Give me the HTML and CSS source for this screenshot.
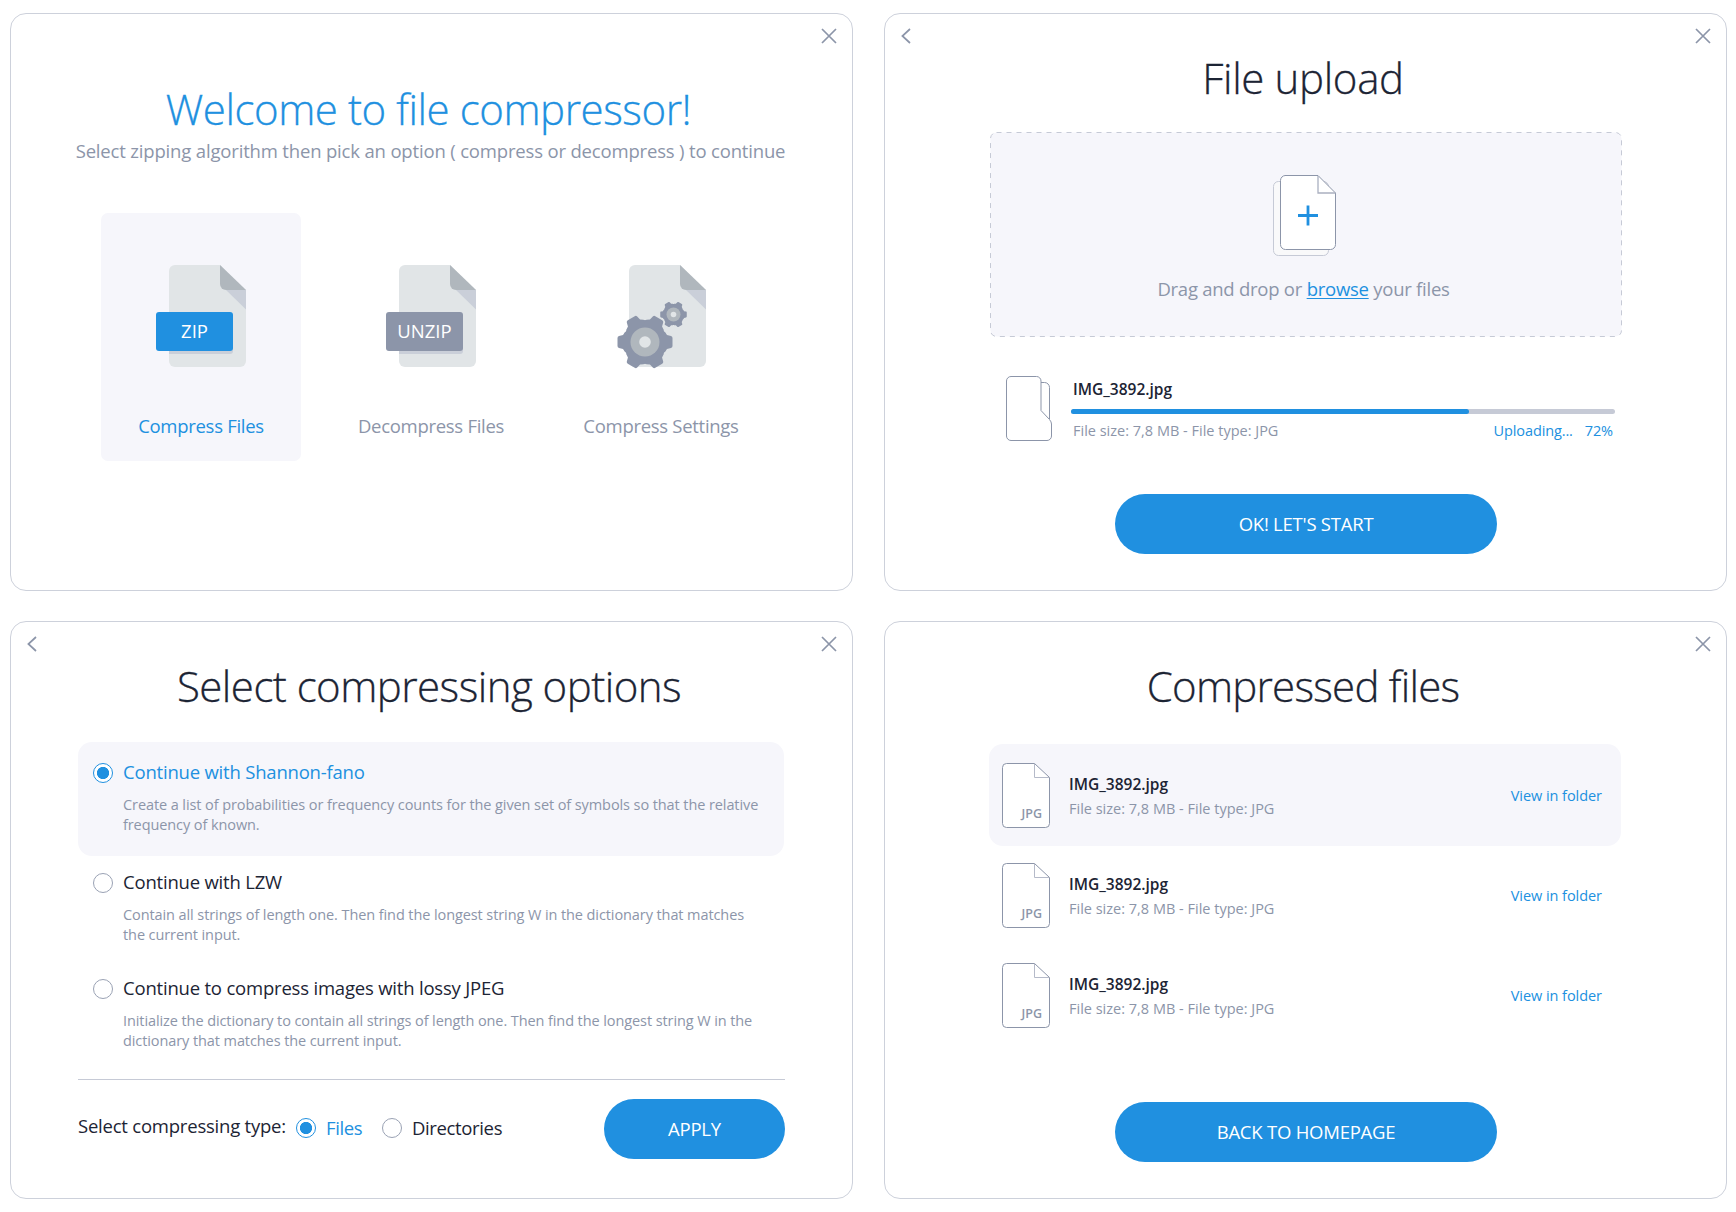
FILE: index.html
```html
<!DOCTYPE html>
<html lang="en">
<head>
<meta charset="utf-8">
<title>File compressor</title>
<link rel="stylesheet" href="styles.css">
</head>
<body>
<svg class="sprite" aria-hidden="true">
  <symbol id="close" viewBox="0 0 16 16"><path d="M1 1l14 14M15 1L1 15" fill="none" stroke="currentColor" stroke-width="1.7"/></symbol>
  <symbol id="back" viewBox="0 0 10 16"><path d="M9 1L1.4 8L9 15" fill="none" stroke="currentColor" stroke-width="1.7"/></symbol>
  <symbol id="sheet" viewBox="0 0 77 102">
    <path d="M6 0H51L77 25V96a6 6 0 0 1-6 6H6a6 6 0 0 1-6-6V6a6 6 0 0 1 6-6z" fill="#e1e5e7"/>
    <path d="M57 25H77V44.500z" fill="#cacfd9"/>
    <path d="M51 0L77 25H57a6 6 0 0 1-6-6z" fill="#b0b7bd"/>
  </symbol>
  <symbol id="gear" viewBox="-28 -28 56 56">
    <g fill="#8c95a9">
      <circle r="22"/>
      <g id="teeth">
        <path id="tooth" d="M-10-20L-7-22L-6-26Q-5.500-27.500-4-27.500H4Q5.500-27.500 6-26L7-22L10-20V0H-10z" transform="rotate(90)"/>
        <use href="#tooth" transform="rotate(60)"/><use href="#tooth" transform="rotate(120)"/>
        <use href="#tooth" transform="rotate(180)"/><use href="#tooth" transform="rotate(240)"/>
        <use href="#tooth" transform="rotate(300)"/>
      </g>
    </g>
    <circle r="14.500" fill="#b0b7bd"/><circle r="5.800" fill="#e1e5e7"/>
  </symbol>
  <symbol id="jpg" viewBox="0 0 50 66">
    <path d="M5.500 1.500H33.500L48.500 15.500V61.500a4 4 0 0 1-4 4H5.500a4 4 0 0 1-4-4V5.500a4 4 0 0 1 4-4z" fill="#fff" stroke="#8c95a9"/>
    <path d="M33.500 2V15.500H48" fill="none" stroke="#b5bac9"/>
  </symbol>
</svg>

<main class="board">
  <section class="panel">
    <header class="bar"><svg class="ico-close"><use href="#close"/></svg></header>
    <h1 class="title title-welcome">Welcome to file compressor!</h1>
    <p class="subtitle">Select zipping algorithm then pick an option ( compress or decompress ) to continue</p>
    <div class="modes">
      <div class="mode active">
        <div class="art"><svg class="sheet"><use href="#sheet"/></svg><i class="shade"></i><span class="tag">ZIP</span></div>
        <span class="mode-name">Compress Files</span>
      </div>
      <div class="mode">
        <div class="art"><svg class="sheet"><use href="#sheet"/></svg><i class="shade"></i><span class="tag">UNZIP</span></div>
        <span class="mode-name">Decompress Files</span>
      </div>
      <div class="mode">
        <div class="art"><svg class="sheet"><use href="#sheet"/></svg><svg class="gear-big"><use href="#gear"/></svg><svg class="gear-small"><use href="#gear"/></svg></div>
        <span class="mode-name">Compress Settings</span>
      </div>
    </div>
  </section>

  <section class="panel">
    <header class="bar"><svg class="ico-back"><use href="#back"/></svg><svg class="ico-close"><use href="#close"/></svg></header>
    <h1 class="title title-upload">File upload</h1>
    <div class="drop">
      <svg class="drop-frame"><rect x=".5" y=".5" width="631" height="204" rx="6" fill="#f6f6fb" stroke="#c6cad6" stroke-dasharray="5 5"/></svg>
      <svg class="drop-icon" viewBox="0 0 64 82">
        <rect x=".5" y="6.500" width="55" height="74" rx="5" fill="#f9f9fa" stroke="#c6cad6"/>
        <path d="M12 .5H45L62.500 18V69.500a5 5 0 0 1-5 5H12.500a5 5 0 0 1-5-5V5.500a5 5 0 0 1 5-5z" fill="#fff" stroke="#8c95a9"/>
        <path d="M45 1V18H62.500" fill="none" stroke="#aab0c0" stroke-width="1.300"/>
        <path d="M35 30.500V50.500M25 40.500H45" stroke="#2090e0" stroke-width="2.800"/>
      </svg>
      <p class="drop-text">Drag and drop or <a class="browse">browse</a> your files</p>
    </div>
    <div class="upload">
      <svg class="upload-icon" viewBox="0 0 48 66">
        <path d="M35.500 6.500H39.500a5 5 0 0 1 5 5V43" fill="none" stroke="#8c95a9"/>
        <path d="M6 .5H31.500a4.500 4.500 0 0 1 4.500 4.500V34.500L44.500 43.500Q46.500 46 46.500 48V60a4.500 4.500 0 0 1-4.500 4.500H6A4.500 4.500 0 0 1 1.500 60V5A4.500 4.500 0 0 1 6 .5z" fill="#fff" stroke="#8c95a9"/>
      </svg>
      <div class="upload-body">
        <span class="name">IMG_3892.jpg</span>
        <div class="track"><div class="fill" style="width:73.2%"></div></div>
        <div class="upload-meta"><span class="meta">File size: 7,8 MB - File type: JPG</span><span class="status"><span>Uploading...</span><span>72%</span></span></div>
      </div>
    </div>
    <div class="button wide">OK! LET'S START</div>
  </section>

  <section class="panel">
    <header class="bar"><svg class="ico-back"><use href="#back"/></svg><svg class="ico-close"><use href="#close"/></svg></header>
    <h1 class="title title-options">Select compressing options</h1>
    <div class="options">
      <div class="option active">
        <i class="radio on"></i>
        <div><span class="option-name">Continue with Shannon-fano</span>
        <p class="desc">Create a list of probabilities or frequency counts for the given set of symbols so that the relative<br>frequency of known.</p></div>
      </div>
      <div class="option">
        <i class="radio"></i>
        <div><span class="option-name">Continue with LZW</span>
        <p class="desc">Contain all strings of length one. Then find the longest string W in the dictionary that matches<br>the current input.</p></div>
      </div>
      <div class="option">
        <i class="radio"></i>
        <div><span class="option-name">Continue to compress images with lossy JPEG</span>
        <p class="desc">Initialize the dictionary to contain all strings of length one. Then find the longest string W in the<br>dictionary that matches the current input.</p></div>
      </div>
    </div>
    <footer class="types">
      <span class="types-label">Select compressing type:</span>
      <i class="radio on"></i><span class="type type-files">Files</span>
      <i class="radio"></i><span class="type">Directories</span>
      <div class="button apply">APPLY</div>
    </footer>
  </section>

  <section class="panel">
    <header class="bar"><svg class="ico-close"><use href="#close"/></svg></header>
    <h1 class="title title-files">Compressed files</h1>
    <div class="files">
      <div class="file active">
        <div class="doc"><svg class="doc-icon"><use href="#jpg"/></svg><b class="ext">JPG</b></div>
        <div class="file-text"><span class="name">IMG_3892.jpg</span><span class="meta">File size: 7,8 MB - File type: JPG</span></div>
        <a class="view">View in folder</a>
      </div>
      <div class="file">
        <div class="doc"><svg class="doc-icon"><use href="#jpg"/></svg><b class="ext">JPG</b></div>
        <div class="file-text"><span class="name">IMG_3892.jpg</span><span class="meta">File size: 7,8 MB - File type: JPG</span></div>
        <a class="view">View in folder</a>
      </div>
      <div class="file">
        <div class="doc"><svg class="doc-icon"><use href="#jpg"/></svg><b class="ext">JPG</b></div>
        <div class="file-text"><span class="name">IMG_3892.jpg</span><span class="meta">File size: 7,8 MB - File type: JPG</span></div>
        <a class="view">View in folder</a>
      </div>
    </div>
    <div class="button wide home">BACK TO HOMEPAGE</div>
  </section>
</main>
</body>
</html>
```
FILE: styles.css
```css
* { box-sizing: border-box; margin: 0; padding: 0; }
body {
  width: 1736px; height: 1212px; overflow: hidden;
  background: #fff; color: #1c2434;
  font-family: "Open Sans", "Noto Sans", sans-serif; font-weight: 400;
  white-space: nowrap;
}
.sprite { display: none; }
svg { display: block; flex: none; }
.board {
  display: grid; grid-template-columns: 843px 843px; grid-template-rows: 578px 578px;
  column-gap: 31px; row-gap: 30px; padding: 13px 10px;
}
.panel { border: 1px solid #cdd1db; border-radius: 16px; display: flex; flex-direction: column; }
.bar { display: flex; height: 30px; padding: 14px 15px 0 16px; color: #8c95a9; flex: none; }
.ico-close { width: 16px; height: 16px; margin-left: auto; }
.ico-back { width: 10px; height: 16px; }

.title { font-size: 42px; font-weight: 300; line-height: 62px; height: 60px; text-align: center; flex: none; -webkit-text-stroke: .3px currentColor; }
.title-welcome { margin-top: 34px; padding-right: 6px; color: #2090e0; letter-spacing: -.43px; }
.title-upload { margin-top: 3px; padding-right: 5px; letter-spacing: -.35px; }
.title-options { margin-top: 3px; padding-right: 5px; letter-spacing: -.53px; }
.title-files { margin-top: 3px; padding-right: 5px; letter-spacing: -.75px; }

.subtitle { height: 28px; padding-right: 2px; line-height: 26px; font-size: 18.500px; color: #8c95a9; text-align: center; letter-spacing: -.17px; }
.modes { display: flex; gap: 30px; padding: 47px 0 0 90px; }
.mode { width: 200px; height: 248px; border-radius: 7px; display: flex; flex-direction: column; align-items: center; color: #8c95a9; }
.mode.active { background: #f6f6fb; color: #2090e0; }
.art { position: relative; width: 200px; height: 154px; padding: 52px 0 0 68px; }
.sheet { width: 77px; height: 102px; }
.shade { position: absolute; left: 68px; top: 131px; width: 64px; height: 10px; border-radius: 0 0 3px 0; background: #cacfd9; }
.tag {
  position: absolute; left: 55px; top: 99px; width: 77px; height: 39px; border-radius: 3px;
  background: #8c95a9; color: #fff; font-size: 18.500px; line-height: 38px; text-align: center; letter-spacing: 0;
}
.active .tag { background: #2090e0; }
.gear-big { position: absolute; left: 56px; top: 101px; width: 56px; height: 56px; }
.gear-small { position: absolute; left: 99px; top: 88px; width: 27px; height: 27px; }
.mode-name { margin-top: 44px; font-size: 18.500px; line-height: 30px; letter-spacing: -.29px; }

.drop { position: relative; width: 632px; height: 205px; margin: 25px 0 0 105px; display: flex; flex-direction: column; align-items: center; flex: none; }
.drop-frame { position: absolute; left: 0; top: 0; width: 632px; height: 205px; }
.drop-icon { position: relative; width: 64px; height: 82px; margin: 43px 2px 0 0; }
.drop-text { position: relative; margin-top: 15px; padding-right: 5px; font-size: 18.500px; line-height: 34px; color: #8c95a9; letter-spacing: -.25px; }
.browse { color: #2090e0; text-decoration: underline; text-decoration-thickness: 1px; text-underline-offset: 2px; }

.upload { display: flex; margin: 39px 0 0 120px; height: 66px; flex: none; }
.upload-icon { width: 48px; height: 66px; }
.upload-body { width: 544px; margin-left: 18px; }
.name { display: block; font-weight: 600; font-size: 15.500px; line-height: 24px; color: #1c2434; }
.upload-body .name { padding-left: 2px; margin-top: 1px; }
.track { height: 5px; margin-top: 8px; border-radius: 3px; background: #c6cad6; }
.fill { height: 5px; border-radius: 3px; background: #2090e0; }
.upload-meta { display: flex; justify-content: space-between; padding: 5px 2px 0 2px; line-height: 24px; font-size: 14.500px; }
.meta { color: #8c95a9; font-size: 14.500px; }
.status { display: flex; gap: 12px; color: #2090e0; letter-spacing: -.12px; }

.button { height: 60px; border-radius: 30px; background: #2090e0; color: #fff; text-align: center; font-size: 18.500px; line-height: 60px; letter-spacing: -.23px; flex: none; }
.button.wide { width: 382px; margin: 52px 0 0 230px; }

.options { margin: 27px 0 0 67px; width: 706px; }
.option { display: flex; height: 106px; padding-left: 15px; }
.option.active { height: 114px; border-radius: 14px; background: #f6f6fb; padding-top: 6px; margin-bottom: 2px; }
.radio { width: 20px; height: 20px; border: 1px solid #9aa2b4; border-radius: 50%; background: #fff; flex: none; }
.radio.on { border-color: #2090e0; background: radial-gradient(circle, #2090e0 5.700px, #fff 6.500px); }
.option .radio { margin: 15px 10px 0 0; }
.option-name { display: block; font-size: 18.500px; line-height: 30px; margin-top: 9px; letter-spacing: -.2px; }
.option.active .option-name { color: #2090e0; }
.desc { margin-top: 8px; font-size: 14.500px; line-height: 20px; color: #8c95a9; letter-spacing: -.09px; }
.types { display: flex; align-items: flex-start; width: 707px; margin: 9px 0 0 67px; border-top: 1px solid #c6cad6; font-size: 18.500px; letter-spacing: -.22px; }
.types .radio { margin-top: 38px; }
.types-label { width: 218px; margin-top: 31px; line-height: 30px; }
.type { margin: 33px 0 0 10px; line-height: 30px; letter-spacing: -.36px; }
.type-files { width: 56px; color: #2090e0; }
.apply { width: 181px; margin: 19px 0 0 auto; }

.files { margin: 29px 0 0 104px; width: 632px; height: 306px; }
.file { display: flex; height: 100px; padding: 18px 19px 0 12px; }
.file.active { height: 102px; margin-bottom: -2px; border-radius: 14px; background: #f6f6fb; }
.doc { position: relative; width: 50px; height: 66px; }
.doc-icon { width: 50px; height: 66px; }
.ext { position: absolute; right: 9px; bottom: 5px; font-size: 12.500px; font-weight: 600; line-height: 18px; color: #8c95a9; }
.file-text { margin-left: 18px; padding-top: 10px; }
.file-text .meta { display: block; line-height: 24px; margin-top: 1px; }
.view { margin: 22px 0 0 auto; color: #2090e0; font-size: 14.500px; line-height: 24px; letter-spacing: -.05px; }
.button.home { margin-top: 52px; }
```
